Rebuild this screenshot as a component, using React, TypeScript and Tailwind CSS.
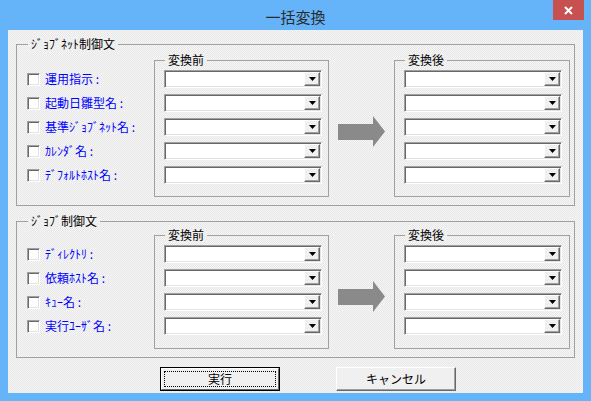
import React from 'react';

const font = "font-['Noto_Sans_CJK_JP','Noto_Sans',sans-serif]";
const dither = 'bg-[repeating-conic-gradient(#f7f7f7_0_25%,#e6e6e6_0_50%)] bg-[length:2px_2px]';

const Combo = () => (
  <div className="flex h-[18px] w-[158px] border border-t-[#a0a0a0] border-l-[#a0a0a0] border-b-white border-r-white bg-white p-[1px] shadow-[inset_1px_1px_0_#696969,inset_-1px_-1px_0_#e3e3e3]">
    <div className="ml-auto flex h-full w-[16px] items-center justify-center border border-t-white border-l-white border-b-[#696969] border-r-[#696969] bg-[#f0f0f0] shadow-[inset_-1px_-1px_0_#a0a0a0]">
      <svg width="7" height="4" viewBox="0 0 7 4">
        <polygon points="0,0 7,0 3.5,4" fill="#000" />
      </svg>
    </div>
  </div>
);

const CheckRow = ({ label }: { label: string }) => (
  <div className="flex h-[18px] items-center gap-[5px]">
    <div className="h-[13px] w-[13px] border border-t-[#a0a0a0] border-l-[#a0a0a0] border-b-white border-r-white bg-white shadow-[inset_1px_1px_0_#696969,inset_-1px_-1px_0_#e3e3e3]" />
    <span className="text-[12px] leading-[14px] text-[#0000ff]">{label}</span>
  </div>
);

const Legend = ({ text, left }: { text: string; left: string }) => (
  <span className={`absolute -top-[8px] ${left} px-[3px] text-[12px] leading-[14px] text-black bg-[#efefef]`}>
    {text}
  </span>
);

const Box = ({ title, rows, height, width }: { title: string; rows: number; height: string; width: string }) => (
  <div className={`relative ${height} ${width} border border-[#a0a0a0] pl-[9px] pt-[9px]`}>
    <Legend text={title} left="left-[10px]" />
    <div className="flex flex-col gap-[6px]">
      {Array.from({ length: rows }).map((_, i) => (
        <Combo key={i} />
      ))}
    </div>
  </div>
);

const Arrow = () => (
  <svg width="48" height="32" viewBox="0 0 48 32">
    <polygon points="0,8 35,8 35,0 47,15.5 35,31 35,24 0,24" fill="#8a8a8a" />
  </svg>
);

type GroupProps = {
  title: string;
  labels: string[];
  height: string;
  boxTop: string;
  listTop: string;
  boxHeight: string;
  arrowTop: string;
};

const Group = ({ title, labels, height, boxTop, listTop, boxHeight, arrowTop }: GroupProps) => (
  <div className={`relative ${height} border border-[#a0a0a0]`}>
    <Legend text={title} left="left-[11px]" />
    <div className="flex">
      <div className={`flex w-[137px] flex-col gap-[6px] pl-[10px] ${listTop}`}>
        {labels.map((l) => (
          <CheckRow key={l} label={l} />
        ))}
      </div>
      <div className={boxTop}>
        <Box title="変換前" rows={labels.length} height={boxHeight} width="w-[175px]" />
      </div>
      <div className={`flex w-[65px] justify-center ${arrowTop}`}>
        <Arrow />
      </div>
      <div className={boxTop}>
        <Box title="変換後" rows={labels.length} height={boxHeight} width="w-[176px]" />
      </div>
    </div>
  </div>
);

export default function App() {
  return (
    <div className={`flex h-[401px] w-[591px] flex-col bg-[#65b4fa] ${font}`}>
      {/* Title bar */}
      <div className="relative flex h-[30px] items-center justify-center pt-[4px]">
        <span className="text-[15px] leading-[20px] text-[#2b2b2b]">一括変換</span>
        <div className="absolute right-[7px] top-0 flex h-[20px] w-[31px] items-center justify-center bg-[#c75050]">
          <svg width="9" height="9" viewBox="0 0 9 9">
            <path d="M1 1 L8 8 M8 1 L1 8" stroke="#fff" strokeWidth="2" />
          </svg>
        </div>
      </div>

      {/* Client area */}
      <div className={`mx-[8px] h-[363px] ${dither} px-[8px] pt-[14px]`}>
        <Group
          title="ｼﾞｮﾌﾞﾈｯﾄ制御文"
          labels={['運用指示 :', '起動日雛型名 :', '基準ｼﾞｮﾌﾞﾈｯﾄ名 :', 'ｶﾚﾝﾀﾞ名 :', 'ﾃﾞﾌｫﾙﾄﾎｽﾄ名 :']}
          height="h-[162px]"
          boxTop="pt-[15px]"
          listTop="pt-[25px]"
          boxHeight="h-[137px]"
          arrowTop="pt-[71px]"
        />
        <div className="mt-[15px]">
          <Group
            title="ｼﾞｮﾌﾞ制御文"
            labels={['ﾃﾞｨﾚｸﾄﾘ :', '依頼ﾎｽﾄ名 :', 'ｷｭｰ名 :', '実行ﾕｰｻﾞ名 :']}
            height="h-[137px]"
            boxTop="pt-[13px]"
            listTop="pt-[23px]"
            boxHeight="h-[114px]"
            arrowTop="pt-[59px]"
          />
        </div>

        {/* Buttons */}
        <div className="mt-[9px] flex gap-[56px] pl-[144px]">
          <button className="h-[24px] w-[120px] border border-black bg-[#f0f0f0] p-0">
            <div className="flex h-full w-full items-center justify-center border border-t-white border-l-white border-b-[#696969] border-r-[#696969] p-[2px]">
              <div className="flex h-full w-full items-center justify-center border border-dotted border-black text-[12px] leading-[14px] text-black">
                実行
              </div>
            </div>
          </button>
          <button className="flex h-[24px] w-[120px] items-center justify-center border border-t-white border-l-white border-b-[#696969] border-r-[#696969] bg-[#f0f0f0] text-[12px] leading-[14px] text-black shadow-[inset_-1px_-1px_0_#a0a0a0]">
            キャンセル
          </button>
        </div>
      </div>
    </div>
  );
}
